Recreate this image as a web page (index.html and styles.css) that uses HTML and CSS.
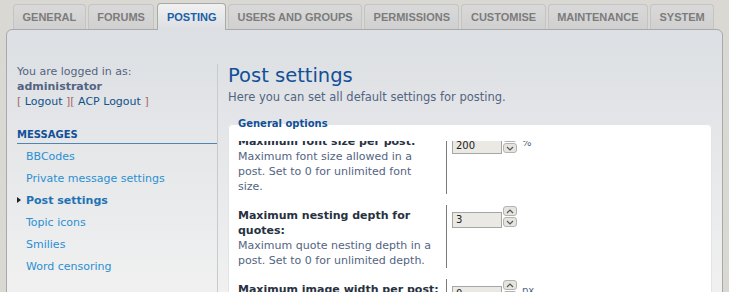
FILE: index.html
```html
<!DOCTYPE html>
<html lang="en">
<head>
    <meta charset="UTF-8">
    <title>Post settings</title>
    <link rel="stylesheet" href="styles.css">
</head>
<body>

<ul class="tabs">
    <li><a href="#">General</a></li>
    <li><a href="#">Forums</a></li>
    <li class="active"><a href="#">Posting</a></li>
    <li><a href="#">Users and groups</a></li>
    <li><a href="#">Permissions</a></li>
    <li><a href="#">Customise</a></li>
    <li><a href="#">Maintenance</a></li>
    <li><a href="#">System</a></li>
</ul>

<div class="panel">
    <div class="menu">
        <p class="login">
            You are logged in as:<br>
            <strong>administrator</strong><br>
            <span class="bracket">[</span> <a href="#">Logout</a> <span class="bracket">][</span> <a href="#">ACP Logout</a> <span class="bracket">]</span>
        </p>
        <h3>Messages</h3>
        <ul class="links">
            <li><a href="#">BBCodes</a></li>
            <li><a href="#">Private message settings</a></li>
            <li class="current"><a href="#">Post settings</a></li>
            <li><a href="#">Topic icons</a></li>
            <li><a href="#">Smilies</a></li>
            <li><a href="#">Word censoring</a></li>
        </ul>
    </div>

    <div class="main">
        <h1>Post settings</h1>
        <p class="intro">Here you can set all default settings for posting.</p>

        <fieldset>
            <legend>General options</legend>
            <div class="scroll">
                <div class="rows">
                    <dl>
                        <dt>
                            <label>Maximum font size per post:</label><br>
                            <span>Maximum font size allowed in a post. Set to 0 for unlimited font size.</span>
                        </dt>
                        <dd>
                            <div class="number">200</div>
                            <div class="spin">
                                <div class="spin-btn"><svg width="8" height="5" viewBox="0 0 8 5"><polyline points="1,4 4,1 7,4" fill="none" stroke="#555" stroke-width="1.2"/></svg></div>
                                <div class="spin-btn"><svg width="8" height="5" viewBox="0 0 8 5"><polyline points="1,1 4,4 7,1" fill="none" stroke="#555" stroke-width="1.2"/></svg></div>
                            </div>
                            <span class="unit">%</span>
                        </dd>
                    </dl>
                    <dl>
                        <dt>
                            <label>Maximum nesting depth for quotes:</label><br>
                            <span>Maximum quote nesting depth in a post. Set to 0 for unlimited depth.</span>
                        </dt>
                        <dd>
                            <div class="number">3</div>
                            <div class="spin">
                                <div class="spin-btn"><svg width="8" height="5" viewBox="0 0 8 5"><polyline points="1,4 4,1 7,4" fill="none" stroke="#555" stroke-width="1.2"/></svg></div>
                                <div class="spin-btn"><svg width="8" height="5" viewBox="0 0 8 5"><polyline points="1,1 4,4 7,1" fill="none" stroke="#555" stroke-width="1.2"/></svg></div>
                            </div>
                        </dd>
                    </dl>
                    <dl>
                        <dt>
                            <label class="nowrap">Maximum image width per post:</label><br>
                            <span>Maximum width of a flash file or image in a post. Set to 0 for unlimited size.</span>
                        </dt>
                        <dd>
                            <div class="number">0</div>
                            <div class="spin">
                                <div class="spin-btn"><svg width="8" height="5" viewBox="0 0 8 5"><polyline points="1,4 4,1 7,4" fill="none" stroke="#555" stroke-width="1.2"/></svg></div>
                                <div class="spin-btn"><svg width="8" height="5" viewBox="0 0 8 5"><polyline points="1,1 4,4 7,1" fill="none" stroke="#555" stroke-width="1.2"/></svg></div>
                            </div>
                            <span class="unit">px</span>
                        </dd>
                    </dl>
                </div>
            </div>
        </fieldset>
    </div>
</div>

</body>
</html>
```

FILE: styles.css
```css
* {
    margin: 0;
    padding: 0;
    box-sizing: border-box;
}

html, body {
    overflow: hidden;
}

body {
    background-color: #dad8d3;
    padding: 0 6px;
    font-family: "DejaVu Sans", Verdana, sans-serif;
    font-size: 11px;
    color: #536482;
}

a {
    text-decoration: none;
}

ul {
    list-style: none;
}

/* tabs */

.tabs {
    display: flex;
    align-items: flex-end;
    height: 30px;
    padding-left: 7px;
    position: relative;
    z-index: 1;
}

.tabs li {
    margin-right: 2px;
    height: 25px;
    margin-bottom: 1px;
    border: 1px solid #c4c4c4;
    border-bottom: none;
    border-radius: 4px 4px 0 0;
    background: linear-gradient(#d9d9d9, #d0d0d0);
    white-space: nowrap;
}

.tabs a {
    display: block;
    padding: 0 8.5px;
    line-height: 25px;
    font-family: "Liberation Sans", Arial, sans-serif;
    font-size: 11px;
    font-weight: bold;
    text-transform: uppercase;
    color: #7c7c7c;
}

.tabs li.active {
    height: 27px;
    margin: 0 2px 0 1px;
    border-color: #a9a9a9;
    background: linear-gradient(#f1f1f1, #dcdee2);
}

.tabs li.active a {
    color: #1a5ea8;
    line-height: 27px;
}

/* panel */

.panel {
    display: flex;
    align-items: flex-start;
    margin-top: -1px;
    min-height: 300px;
    padding: 34px 0 0 10px;
    border: 1px solid #a9a9a9;
    border-radius: 6px 6px 0 0;
    background: linear-gradient(#dcdfe3, #f1f1f1 270px);
}

.menu {
    width: 201px;
    flex-shrink: 0;
    min-height: 240px;
    border-right: 1px solid #cacaca;
}

.login {
    line-height: 15px;
}

.login strong {
    color: #536482;
}

.login a {
    color: #105289;
}

.bracket {
    color: #a66a6a;
}

.menu h3 {
    margin-top: 18px;
    padding-bottom: 1px;
    border-bottom: 1px solid #4f84b6;
    font-size: 10px;
    line-height: 15px;
    text-transform: uppercase;
    color: #115098;
}

.links {
    padding: 1px 0 0 9px;
}

.links li {
    display: flex;
    align-items: center;
    height: 22px;
}

.links a {
    color: #2a90d2;
}

.links li.current a {
    font-weight: bold;
    color: #1f73b4;
}

.links li.current::before {
    content: "";
    margin-left: -9px;
    margin-right: 5px;
    border-top: 3px solid transparent;
    border-bottom: 3px solid transparent;
    border-left: 4px solid #222;
}

/* main */

.main {
    flex: 1;
    padding: 0 10px;
}

.main h1 {
    font-size: 19.5px;
    font-weight: normal;
    line-height: 24px;
    color: #115098;
}

.intro {
    margin-top: 2px;
    font-size: 11.5px;
    line-height: 15px;
}

fieldset {
    margin-top: 13px;
    padding: 0 9px;
    border: 1px solid #e2e4e7;
    border-radius: 5px;
    background-color: #fff;
}

legend {
    padding: 0;
    font-size: 10px;
    font-weight: bold;
    line-height: 12px;
    color: #115098;
}

.scroll {
    margin-top: 11px;
    height: 170px;
    overflow: hidden;
}

.rows {
    margin-top: -10px;
}

dl {
    display: flex;
    margin-bottom: 11px;
}

dt {
    width: 209px;
    padding: 3px 10px 0 0;
    border-right: 1px solid #7a7a7a;
    line-height: 15px;
}

dt label {
    font-weight: bold;
    color: #28313f;
}

dt .nowrap {
    white-space: nowrap;
}

dd {
    display: flex;
    align-items: flex-start;
    margin-left: 5px;
}

.number {
    width: 50px;
    height: 16px;
    margin-top: 7px;
    padding-left: 3px;
    border: 1px solid #a6a6a6;
    background-color: #ebe9e4;
    font-size: 10px;
    line-height: 14px;
    color: #222;
}

.spin {
    margin: 1px 0 0 1px;
    width: 14px;
}

.spin-btn {
    height: 10px;
    margin-bottom: 1px;
    border: 1px solid #b3b3b3;
    border-radius: 3px;
    background-color: #e6e4df;

    display: flex;
    justify-content: center;
    align-items: center;
}

.unit {
    margin: 6px 0 0 5px;
    font-size: 10px;
    line-height: 12px;
}
```
